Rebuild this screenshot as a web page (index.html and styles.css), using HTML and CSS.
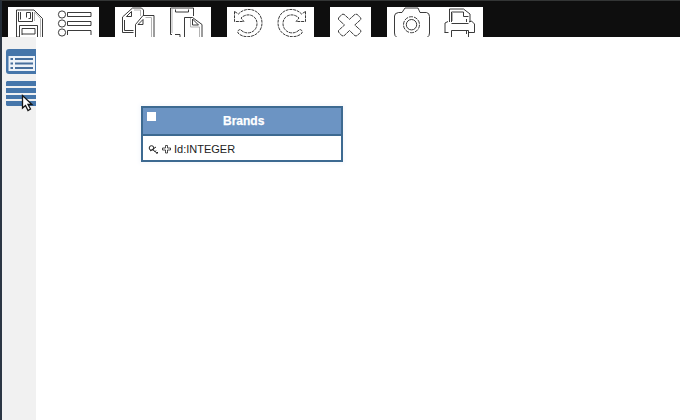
FILE: index.html
```html
<!DOCTYPE html>
<html lang="en">
<head>
<meta charset="utf-8">
<title>Schema designer</title>
<link rel="stylesheet" href="styles.css">
</head>
<body>
<div class="app">
  <header class="toolbar">
    <div class="group files">
      <svg viewBox="8 7 91 30"><path d="M19 37h-2.5V10H34l8.5 8.5V37M18.500 12v9.500h14V12M20.500 12v7.500M26.500 17.500v-5h4v6h-2"/><path class="soft" d="M34.500 12v9M34.500 12l6 6.500V37"/><path d="M19.500 37V25.500h18V37M22 35v-6.500h13V34H22"/><circle cx="62" cy="14.500" r="3.600"/><circle cx="62" cy="23.500" r="3.600"/><circle cx="62" cy="32.500" r="3.600"/><path d="M67.500 12.500h23.500v4H67.500zM67.500 21.500h23.500v4H67.500zM67.500 35v-4.500h23.500V35"/></svg>
    </div>
    <div class="group clipboard">
      <svg viewBox="115 7 96 30"><path d="M133.500 32.500h-11V17L132.500 8h9l2 2v5M124.500 20v10.500h9M126.500 16.500h5v-5zM135.500 37v-12.500l7.500-9h11V37M138 24.500l5-5v5z"/><path class="soft" d="M134 10h6.500v6M151.500 37V17.500h-6"/><path d="M172 34.500h-1.500V8h23v8M175.500 9.500v2.500h13V9.500M175 34.500h5v2.500M184.500 37V17.500h8l9.500 7V37M192.500 19v6h6z"/><path class="soft" d="M172 8v25M199.500 37V27h-9V18"/></svg>
    </div>
    <div class="group history">
      <svg viewBox="227 7 87 30"><g id="turn"><path stroke-dasharray="3 .8" d="M234.500 11.500v10h9.500l-3-3.500c7-6.500 16-2 16 5.500 0 8-8.500 12-15 7.500-2-3-5-.5-4 2 7 7.500 24 3.500 24-10 0-14-16-17.500-23.500-9z"/></g><use href="#turn" transform="translate(540 0) scale(-1 1)"/></svg>
    </div>
    <div class="group remove">
      <svg viewBox="330 7 41 30"><path stroke-dasharray="4 .5" d="M338.500 18l3.500-3.700h2l5.500 5 5.500-5h2l3.800 3.700v1.500l-6 5.500 6 5.500v1.500l-3.800 3.800h-2l-5.500-5.300-5.500 5.300h-2l-3.500-3.800v-1.500l6-5.500-6-5.500z"/></svg>
    </div>
    <div class="group output">
      <svg viewBox="387 7 96 30"><path d="M396.500 37q-2-1-2-4V16q0-3 4-3.500h3.500l3-4.500h13l2 4.500h6.500q3 .5 3 4V33q0 3-2 4"/><circle cx="411.500" cy="24.700" r="8" stroke-dasharray="4 1"/><circle cx="411.500" cy="24.700" r="5.200"/><path d="M449.500 22V9h14l6.500 5v8M445 32.500v-9.500l3-1.500M448.500 32.500h-4M451.500 23.500h17M451.500 37v-6.500h17V37M468.500 32.500h6V24l-3-3-2.500 1M451.500 22V12h12v4.500h5M466.500 19v3M466.500 31v3"/><path class="soft" d="M452.500 12v9"/></svg>
    </div>
  </header>
  <div class="workspace">
    <nav class="sidebar">
      <svg class="table-icon" viewBox="6 49 30 26"><path fill="#4676aa" d="M36 49H9q-3 0-3 3v19q0 3 3 3h27z"/><path fill="#edf2f8" d="M8.500 56H35v15H8.500z"/><path stroke="#476f9d" stroke-width="1.800" d="M10.500 59h2.500M15 59h18M10.500 63.500h2.500M15 63.500h18M10.500 68h2.500M15 68h18"/></svg>
      <svg class="rows-icon" viewBox="6 81 30 25"><path fill="#4676aa" d="M7 81h29v5H6v-4zM6 88h30v5H6zM6 95h30v4H6zM6 101h30v5H7l-1-1z"/></svg>
    </nav>
    <main class="canvas">
      <section class="entity">
        <h1><span class="check"></span>Brands</h1>
        <div class="field">
          <svg viewBox="147 142 25 14"><g fill="none" stroke="#222"><circle cx="151.500" cy="148" r="2.300"/><path d="M150 151l6-4M152.500 149.500l5 4M154.500 152l1.500-1.500M156.500 153.500l1.500-1.500"/><path d="M165.500 145.500h2v2.500h3v2h-3v3h-2v-3h-3v-2h3z" stroke-width=".8"/></g></svg><span>Id:INTEGER</span>
        </div>
      </section>
    </main>
  </div>
  <svg class="cursor" viewBox="20 94 14 20"><path d="M22.500 95.500v12.500l3-2.500 2.500 5 2.500-1.500-2.500-4.500h4z" fill="#fff" stroke="#151515" stroke-width="1.300"/></svg>
</div>
</body>
</html>
```
FILE: styles.css
```css
* { box-sizing: border-box; }
body { margin: 0; font-family: "Liberation Sans", Arial, sans-serif; }
svg { display: block; }
.app {
  position: relative;
  width: 680px;
  height: 420px;
  overflow: hidden;
  display: flex;
  flex-direction: column;
  background: #fff;
}
.toolbar {
  height: 37px;
  flex: none;
  display: flex;
  gap: 16px;
  padding: 6px 8px 0 6px;
  background: #0e0e0e;
  border-top: 1px solid #333535;
  border-left: 2px solid #252e38;
}
.group { height: 30px; background: #fff; }
.group svg {
  width: 100%;
  height: 30px;
  fill: none;
  stroke: #252525;
  stroke-width: .9;
}
.group .soft { stroke: #aaa; }
.files { width: 91px; }
.clipboard { width: 96px; }
.history { width: 87px; }
.remove { width: 41px; }
.output { width: 96px; }
.workspace { flex: 1; display: flex; }
.sidebar {
  width: 36px;
  padding: 12px 0 0 4px;
  border-left: 2px solid #2b3644;
  background: #f1f1f1;
}
.table-icon { width: 30px; height: 26px; }
.rows-icon { width: 30px; height: 25px; margin-top: 6px; }
.canvas { flex: 1; padding: 69px 0 0 105px; }
.entity {
  width: 202px;
  height: 56px;
  border: 2px solid #3d6a91;
  background: #fff;
  box-shadow: 0 0 4px 2px #f7f9fc;
}
.entity h1 {
  display: flex;
  align-items: center;
  height: 28px;
  margin: 0;
  padding: 0 0 0 4px;
  background: #6c94c3;
  border-bottom: 2px solid #3d6a91;
  color: #fff;
  font-size: 12px;
  line-height: 14px;
  -webkit-text-stroke: .25px #fff;
}
.check { width: 9px; height: 9px; margin: -9px 67px 0 0; background: #fff; }
.field {
  display: flex;
  align-items: center;
  height: 24px;
  padding: 2px 0 0 4px;
  color: #222;
  font-size: 11px;
  line-height: 14px;
}
.field svg { width: 25px; height: 14px; margin-right: 2px; }
.cursor { position: absolute; left: 20px; top: 94px; width: 14px; height: 20px; }
```
